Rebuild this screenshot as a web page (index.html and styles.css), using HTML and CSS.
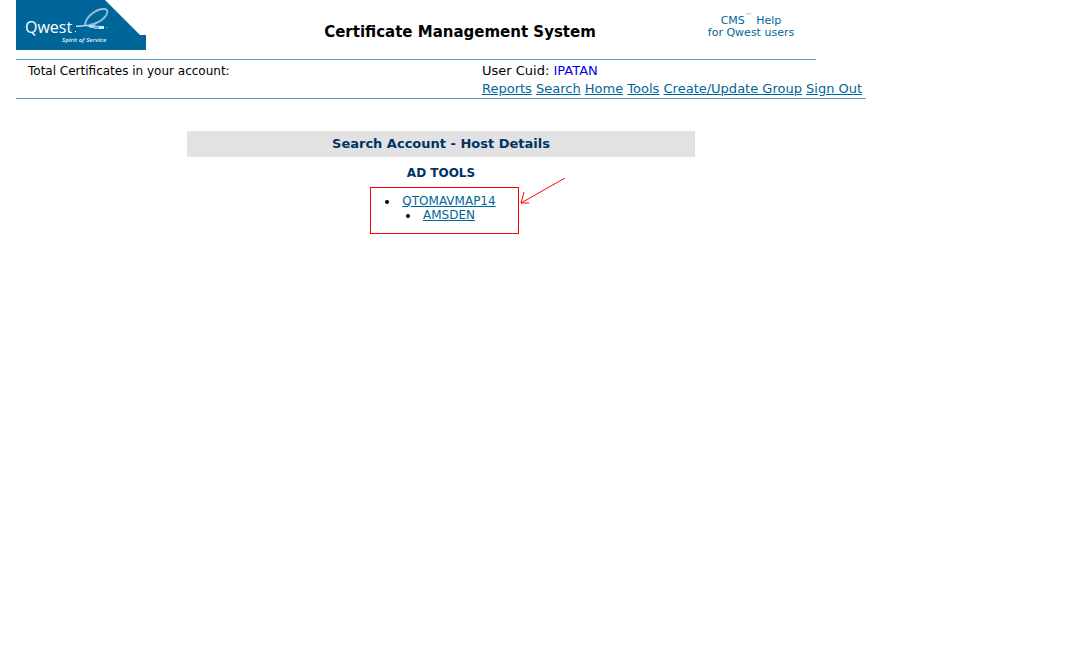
FILE: index.html
```html
<!DOCTYPE html>
<html lang="en">
<head>
<meta charset="utf-8">
<title>Certificate Management System</title>
<link rel="stylesheet" href="styles.css">
</head>
<body>
<div class="page">
  <header class="masthead">
    <svg class="logo" width="130" height="50" viewBox="0 0 130 50" role="img" aria-label="Qwest Spirit of Service">
      <path d="M0 0H89L124 35H130V50H0Z" fill="#006699"/>
      <path d="M60 26C64 27 66 25 71 25.500H80" fill="none" stroke="#b5d9ec" stroke-width="1.500"/>
      <path d="M69 25C70 17 79 9 88 9C93 9 92 14 88 18C84 22 79 24 73 25" fill="none" stroke="#8fc1dc" stroke-width="2"/>
      <path d="M70 25H80V28H75Q72 27 70 25Z" fill="#b5d9ec"/>
      <path d="M78 25.500H83V29H78Z" fill="#7fb4e0"/>
      <path d="M83 26H88V29H83Z" fill="#d9ecf6"/>
      <path d="M90 27H91V28H90Z" fill="#8fc1dc"/>
      <text class="logo-name" x="9" y="33">Qwest</text>
      <path d="M59 31h1v1h-1z" fill="#fff"/>
      <text class="logo-tag" x="46" y="42">Spirit of Service</text>
    </svg>
    <h1 class="title">Certificate Management System</h1>
    <a class="help" href="#">CMS<sup class="tm">™</sup> Help<br>for Qwest users</a>
  </header>
  <section class="account">
    <p class="total">Total Certificates in your account:</p>
    <div class="user">
      <p class="cuid">User Cuid: <span class="cuid-value">IPATAN</span></p>
      <nav class="menu">
        <a href="#">Reports</a>
        <a href="#">Search</a>
        <a href="#">Home</a>
        <a href="#">Tools</a>
        <a href="#">Create/Update Group</a>
        <a href="#">Sign Out</a>
      </nav>
    </div>
  </section>
  <main class="details">
    <h2 class="bar">Search Account - Host Details</h2>
    <h3 class="group">AD TOOLS</h3>
    <div class="listing">
      <div class="callout">
        <ul class="hosts">
          <li><a href="#">QTOMAVMAP14</a>
            <ul class="hosts">
              <li><a href="#">AMSDEN</a></li>
            </ul>
          </li>
        </ul>
        <svg class="arrow" width="48" height="28" viewBox="0 0 48 28" aria-hidden="true">
          <path d="M47 0L3 25M6 14L3 25H11" fill="none" stroke="#f00"/>
        </svg>
      </div>
    </div>
  </main>
</div>
</body>
</html>
```
FILE: styles.css
```css
body {
  margin: 0;
  background: #fff;
  color: #000;
  font: 12px/14px "DejaVu Sans", Verdana, sans-serif;
}
h1, h2, h3, p, ul { margin: 0; padding: 0; }
a { color: #006699; }
.page { max-width: 850px; margin-left: 16px; }
.masthead {
  display: grid;
  grid-template-columns: 130px 1fr 130px;
  max-width: 800px;
  padding-bottom: 9px;
  border-bottom: 1px solid #6699cc;
}
.logo { display: block; }
.logo-name { font: 500 16px "Open Sans", sans-serif; fill: #fff; }
.logo-tag { font: italic bold 6px "Open Sans", sans-serif; fill: #c5e0ee; }
.title {
  padding-top: 22px;
  padding-left: 88px;
  font-size: 15px;
  line-height: 20px;
  font-weight: bold;
  text-align: center;
}
.help {
  padding-top: 15px;
  font-size: 11px;
  line-height: 12px;
  text-align: center;
  text-decoration: none;
}
.tm { font-size: 8px; line-height: 0; color: #99c2d6; }
.account {
  display: grid;
  grid-template-columns: 454px 1fr;
  padding: 2px 0 0 12px;
  border-bottom: 1px solid #6699cc;
  line-height: 18px;
}
.user { font-size: 13px; white-space: nowrap; }
.cuid-value { color: #0000e6; }
.details {
  max-width: 508px;
  margin: 32px auto 0;
  text-align: center;
}
.bar, .group { color: #003366; }
.bar { background: #e2e2e2; font-size: 13px; line-height: 26px; }
.group { padding: 7px 0 5px; font-size: 12px; line-height: 18px; }
.listing { padding-left: 7px; }
.callout {
  position: relative;
  width: fit-content;
  margin: 0 auto;
  padding: 6px 22px 11px 14px;
  border: 1px solid #f00;
}
.hosts { list-style: disc inside; }
.arrow { position: absolute; left: 100%; top: -10px; }
```
